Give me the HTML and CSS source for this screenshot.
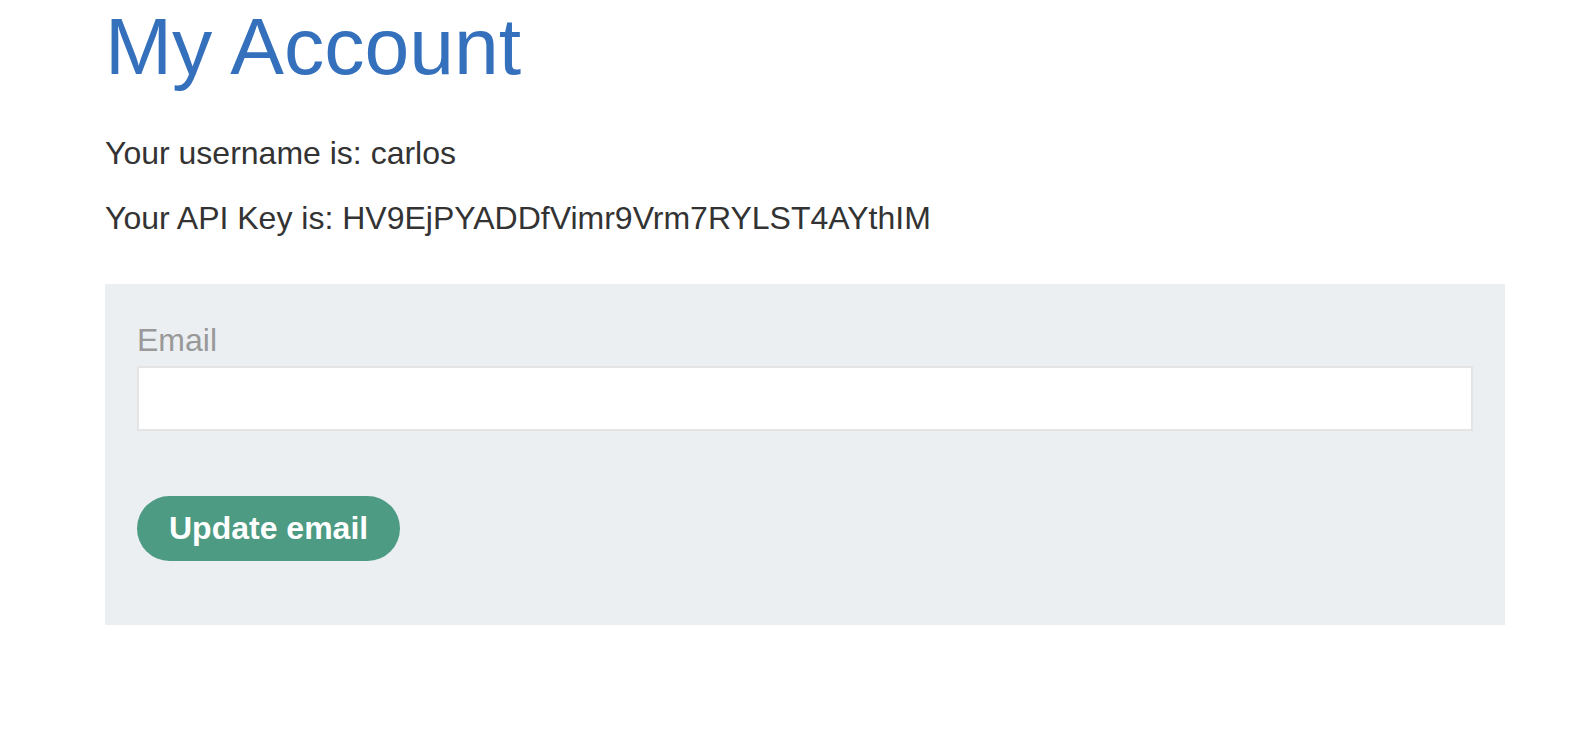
FILE: index.html
```html
<!DOCTYPE html>
<html lang="en">
<head>
<meta charset="utf-8">
<title>My Account</title>
<link rel="stylesheet" href="styles.css">
</head>
<body>
<div class="container">
  <h1 class="title">My Account</h1>
  <p class="info info-user">Your username is: carlos</p>
  <p class="info info-key">Your API Key is: HV9EjPYADDfVimr9Vrm7RYLST4AYthIM</p>
  <form class="email-form">
    <label class="field-label" for="email">Email</label>
    <input class="field-input" id="email" type="email" name="email">
    <button class="btn" type="button">Update email</button>
  </form>
</div>
</body>
</html>
```
FILE: styles.css
```css
html, body {
  margin: 0;
  padding: 0;
  background: #ffffff;
}
body {
  font-family: "Liberation Sans", Arial, sans-serif;
  color: #333333;
}
.container {
  width: 1400px;
  padding-left: 105px;
}
.title {
  margin: 0 0 41px 0;
  font-size: 80.5px;
  line-height: 92px;
  font-weight: normal;
  color: #3470bb;
}
.info {
  margin: 0;
  font-size: 32px;
  line-height: 40px;
}
.info-user {
  margin-bottom: 25px;
}
.info-key {
  margin-bottom: 46px;
}
.email-form {
  display: flex;
  flex-direction: column;
  align-items: flex-start;
  background: #ebeff2;
  padding: 36px 32px 64px 32px;
}
.field-label {
  font-size: 32px;
  line-height: 40px;
  color: #999999;
  margin-bottom: 6px;
}
.field-input {
  box-sizing: border-box;
  width: 100%;
  height: 65px;
  margin: 0 0 65px 0;
  border: 2px solid #e4e4e4;
  background: #ffffff;
  outline: none;
  font-family: inherit;
  font-size: 32px;
  padding: 0 12px;
}
.btn {
  height: 65px;
  padding: 0 32px;
  border: none;
  border-radius: 33px;
  background: #4c9b82;
  color: #ffffff;
  font-family: "Liberation Sans", Arial, sans-serif;
  font-weight: bold;
  font-size: 32px;
  line-height: 65px;
  cursor: pointer;
}
```
